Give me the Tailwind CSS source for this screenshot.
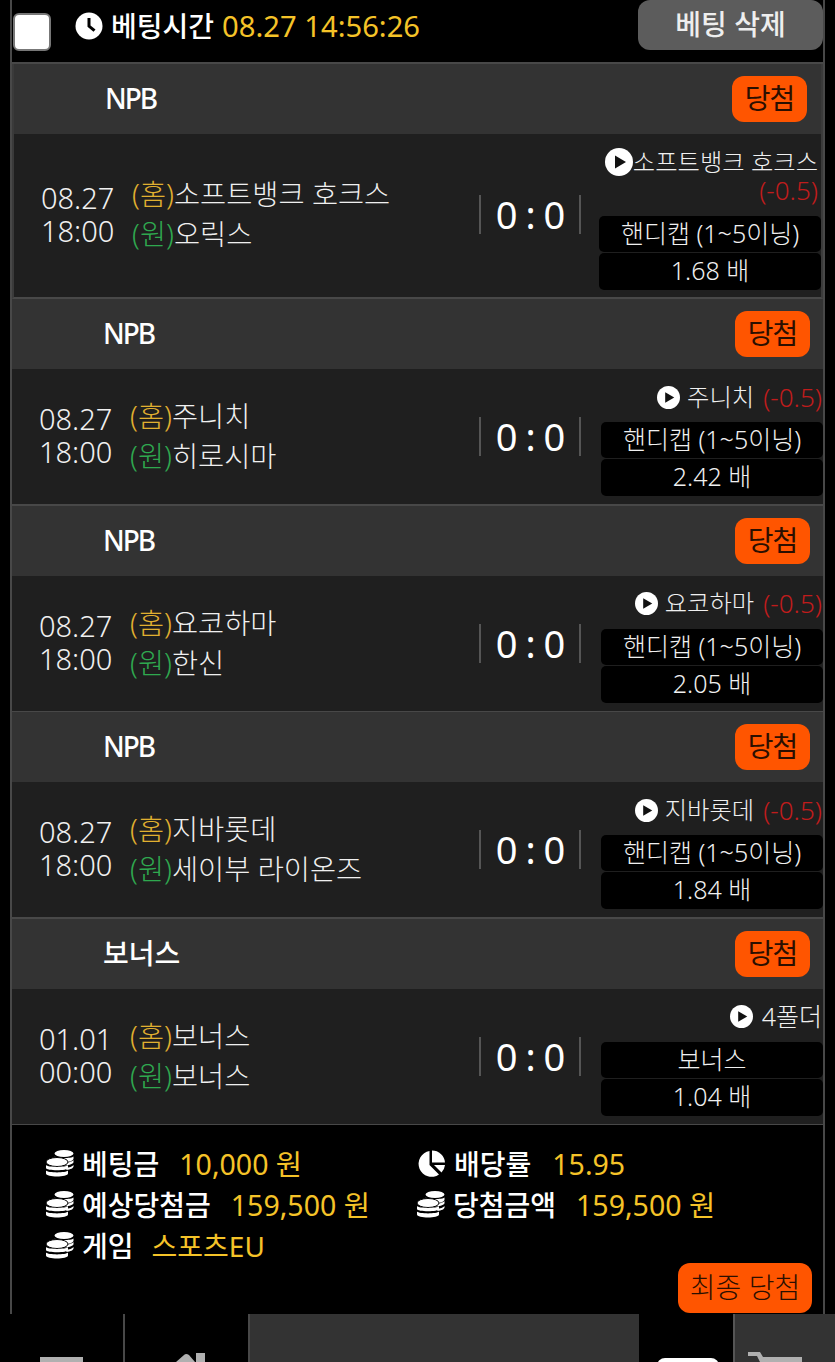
<!DOCTYPE html>
<html lang="ko">
  <head>
    <meta charset="UTF-8" />
    <meta name="viewport" content="width=device-width, initial-scale=1.0" />
    <title>베팅내역</title>
    <script src="https://cdn.jsdelivr.net/npm/@tailwindcss/browser@4"></script>
  </head>
  <body class="bg-black w-[835px] h-[1362px] overflow-hidden font-['Noto_Sans','Noto_Sans_CJK_KR',sans-serif] text-[28px]">
    <svg class="hidden">
      <symbol id="play" viewBox="0 0 28 28"><circle cx="14" cy="14" r="14" fill="#fff" /><path d="M10 7.5 21 14 10 20.5z" fill="#111" /></symbol>
      <symbol id="coins" viewBox="0 0 28 28">
        <ellipse cx="18" cy="3.5" rx="9.5" ry="3.5" fill="#fff" />
        <path d="M8.5 6.5c2 2 17 2 19 0v2c0 2-3 3-6 3.5H12zM17 13c4 0 9-1 10.5-3v2c0 2-4 3-8 3.5zM20 18c3-.5 6.500-1.500 7.500-3v1.500c0 1.500-3 3-7 3.500z" fill="#fff" />
        <ellipse cx="11" cy="12" rx="11" ry="4.500" fill="#fff" stroke="#000" />
        <path d="M0 15c2 2.500 20 2.500 22 0v3c0 3-22 3-22 0zM0 20.500c2 2.500 20 2.500 22 0v3c0 4-22 4-22 0z" fill="#fff" />
      </symbol>
    </svg>

    <div class="mx-[10px] h-[1314px] border-x-2 border-[#484848]">
      <!-- top bar -->
      <div class="h-[52px] flex items-start">
        <div class="w-[38px] h-[38px] ml-px mt-[13px] rounded-[6px] bg-white border-2 border-[#777]"></div>
        <svg class="ml-[24px] mt-[12px]" width="28" height="28" viewBox="0 0 28 28"><circle cx="14" cy="14" r="13.500" fill="#fff" /><path d="M12.500 6h3v7.500l5 4-2 2.200-6-5z" fill="#000" /></svg>
        <span class="ml-[8px] mt-[6px] leading-[40px] font-medium text-white">베팅시간</span>
        <span class="ml-[8px] mt-[6px] text-[29.200px] leading-[40px] text-[#f5c328]">08.27 14:56:26</span>
        <div class="ml-auto w-[185px] h-[50px] rounded-[12px] bg-[#5c5c5c] text-[#eee] leading-[48px] font-medium text-center">베팅 삭제</div>
      </div>
      <div class="h-[12px] border-b-2 border-[#484848]"></div>

      <!-- first game -->
      <div class="h-[235px] border-x-2 border-b-2 border-[#3a3a3a] border-b-[#484848]">
        <div class="h-[70px] bg-[#333] flex items-start justify-between pl-[91px] pr-[14px]">
          <span class="mt-[14px] leading-[40px] font-medium tracking-[-2px] text-white">NPB</span>
          <div class="mt-[12px] w-[75px] h-[46px] rounded-[12px] bg-[#ff5500] text-[#2b0f00] text-center leading-[44px] tracking-[-1px]">당첨</div>
        </div>
        <div class="h-[163px] bg-[#1f1f1f] flex items-start font-light text-[#f0f0f0]">
          <div class="pl-[27px] w-[118px] mt-[47px] text-[29px] leading-[33px]">08.27<br />18:00</div>
          <div class="w-[347px] mt-[40px] text-[28.400px] leading-[40px]">
            <div><span class="text-[#e0b030]">(홈)</span>소프트뱅크 호크스</div>
            <div><span class="text-[#2fa84f]">(원)</span>오릭스</div>
          </div>
          <div class="w-[102px] h-[39px] mt-[61px] border-x-2 border-[#555] flex items-center justify-center text-[38px] leading-[39px] tracking-[-1px] font-normal text-white whitespace-pre">0 : 0</div>
          <div class="ml-[18px] w-[222px] pt-[10px] text-[25px]">
            <div class="h-[36px] flex items-center justify-end pr-[3px] whitespace-nowrap">
              <svg width="28" height="28"><use href="#play" /></svg>
              <span class="text-[24.300px]">소프트뱅크 호크스</span>
            </div>
            <div class="h-[22px] leading-[20px] mb-[14px] pr-[3px] text-right text-[26px] text-[#c01c1c]">(-0.5)</div>
            <div class="h-[36px] mb-px rounded-[5px] bg-black text-center leading-[34px]">핸디캡 (1~5이닝)</div>
            <div class="h-[37px] rounded-[5px] bg-black text-center leading-[35px]">1.68 배</div>
          </div>
        </div>
      </div>

      <!-- second game -->
      <div class="h-[206.6px] border-b-2 border-[#484848]">
        <div class="h-[70px] bg-[#333] flex items-start justify-between pl-[91px] pr-[13px]">
          <span class="mt-[14px] leading-[40px] font-medium tracking-[-2px] text-white">NPB</span>
          <div class="mt-[12px] w-[75px] h-[46px] rounded-[12px] bg-[#ff5500] text-[#2b0f00] text-center leading-[44px] tracking-[-1px]">당첨</div>
        </div>
        <div class="h-[135px] bg-[#1f1f1f] flex items-start font-light text-[#f0f0f0]">
          <div class="pl-[27px] w-[118px] mt-[33px] text-[29px] leading-[33px]">08.27<br />18:00</div>
          <div class="w-[349px] mt-[27px] text-[28.400px] leading-[40px]">
            <div><span class="text-[#e0b030]">(홈)</span>주니치</div>
            <div><span class="text-[#2fa84f]">(원)</span>히로시마</div>
          </div>
          <div class="w-[102px] h-[39px] mt-[48px] border-x-2 border-[#555] flex items-center justify-center text-[38px] leading-[39px] tracking-[-1px] font-normal text-white whitespace-pre">0 : 0</div>
          <div class="ml-[20px] w-[222px] pt-[10px] text-[25px]">
            <div class="h-[36px] mb-[7px] flex items-center justify-end gap-[7px] pr-px whitespace-nowrap">
              <svg width="23" height="23"><use href="#play" /></svg>
              <span class="text-[24.300px]">주니치</span><span class="ml-[2px] text-[26px] text-[#c01c1c]">(-0.5)</span>
            </div>
            <div class="h-[36px] mb-px rounded-[5px] bg-black text-center leading-[34px]">핸디캡 (1~5이닝)</div>
            <div class="h-[37px] rounded-[5px] bg-black text-center leading-[35px]">2.42 배</div>
          </div>
        </div>
      </div>

      <!-- third game -->
      <div class="h-[206.6px] border-b-2 border-[#484848]">
        <div class="h-[70px] bg-[#333] flex items-start justify-between pl-[91px] pr-[13px]">
          <span class="mt-[14px] leading-[40px] font-medium tracking-[-2px] text-white">NPB</span>
          <div class="mt-[12px] w-[75px] h-[46px] rounded-[12px] bg-[#ff5500] text-[#2b0f00] text-center leading-[44px] tracking-[-1px]">당첨</div>
        </div>
        <div class="h-[135px] bg-[#1f1f1f] flex items-start font-light text-[#f0f0f0]">
          <div class="pl-[27px] w-[118px] mt-[33px] text-[29px] leading-[33px]">08.27<br />18:00</div>
          <div class="w-[349px] mt-[27px] text-[28.400px] leading-[40px]">
            <div><span class="text-[#e0b030]">(홈)</span>요코하마</div>
            <div><span class="text-[#2fa84f]">(원)</span>한신</div>
          </div>
          <div class="w-[102px] h-[39px] mt-[48px] border-x-2 border-[#555] flex items-center justify-center text-[38px] leading-[39px] tracking-[-1px] font-normal text-white whitespace-pre">0 : 0</div>
          <div class="ml-[20px] w-[222px] pt-[10px] text-[25px]">
            <div class="h-[36px] mb-[7px] flex items-center justify-end gap-[7px] pr-px whitespace-nowrap">
              <svg width="23" height="23"><use href="#play" /></svg>
              <span class="text-[24.300px]">요코하마</span><span class="ml-[2px] text-[26px] text-[#c01c1c]">(-0.5)</span>
            </div>
            <div class="h-[36px] mb-px rounded-[5px] bg-black text-center leading-[34px]">핸디캡 (1~5이닝)</div>
            <div class="h-[37px] rounded-[5px] bg-black text-center leading-[35px]">2.05 배</div>
          </div>
        </div>
      </div>

      <!-- fourth game -->
      <div class="h-[206.6px] border-b-2 border-[#484848]">
        <div class="h-[70px] bg-[#333] flex items-start justify-between pl-[91px] pr-[13px]">
          <span class="mt-[14px] leading-[40px] font-medium tracking-[-2px] text-white">NPB</span>
          <div class="mt-[12px] w-[75px] h-[46px] rounded-[12px] bg-[#ff5500] text-[#2b0f00] text-center leading-[44px] tracking-[-1px]">당첨</div>
        </div>
        <div class="h-[135px] bg-[#1f1f1f] flex items-start font-light text-[#f0f0f0]">
          <div class="pl-[27px] w-[118px] mt-[33px] text-[29px] leading-[33px]">08.27<br />18:00</div>
          <div class="w-[349px] mt-[27px] text-[28.400px] leading-[40px]">
            <div><span class="text-[#e0b030]">(홈)</span>지바롯데</div>
            <div><span class="text-[#2fa84f]">(원)</span>세이부 라이온즈</div>
          </div>
          <div class="w-[102px] h-[39px] mt-[48px] border-x-2 border-[#555] flex items-center justify-center text-[38px] leading-[39px] tracking-[-1px] font-normal text-white whitespace-pre">0 : 0</div>
          <div class="ml-[20px] w-[222px] pt-[10px] text-[25px]">
            <div class="h-[36px] mb-[7px] flex items-center justify-end gap-[7px] pr-px whitespace-nowrap">
              <svg width="23" height="23"><use href="#play" /></svg>
              <span class="text-[24.300px]">지바롯데</span><span class="ml-[2px] text-[26px] text-[#c01c1c]">(-0.5)</span>
            </div>
            <div class="h-[36px] mb-px rounded-[5px] bg-black text-center leading-[34px]">핸디캡 (1~5이닝)</div>
            <div class="h-[37px] rounded-[5px] bg-black text-center leading-[35px]">1.84 배</div>
          </div>
        </div>
      </div>

      <!-- bonus -->
      <div class="h-[206.6px] border-b-2 border-[#484848]">
        <div class="h-[70px] bg-[#333] flex items-start justify-between pl-[91px] pr-[13px]">
          <span class="mt-[14px] leading-[40px] font-medium text-white">보너스</span>
          <div class="mt-[12px] w-[75px] h-[46px] rounded-[12px] bg-[#ff5500] text-[#2b0f00] text-center leading-[44px] tracking-[-1px]">당첨</div>
        </div>
        <div class="h-[135px] bg-[#1f1f1f] flex items-start font-light text-[#f0f0f0]">
          <div class="pl-[27px] w-[118px] mt-[33px] text-[29px] leading-[33px]">01.01<br />00:00</div>
          <div class="w-[349px] mt-[27px] text-[28.400px] leading-[40px]">
            <div><span class="text-[#e0b030]">(홈)</span>보너스</div>
            <div><span class="text-[#2fa84f]">(원)</span>보너스</div>
          </div>
          <div class="w-[102px] h-[39px] mt-[48px] border-x-2 border-[#555] flex items-center justify-center text-[38px] leading-[39px] tracking-[-1px] font-normal text-white whitespace-pre">0 : 0</div>
          <div class="ml-[20px] w-[222px] pt-[10px] text-[25px]">
            <div class="h-[36px] mb-[7px] flex items-center justify-end gap-[7px] pr-px whitespace-nowrap">
              <svg width="23" height="23"><use href="#play" /></svg>
              <span class="ml-[2px]">4폴더</span>
            </div>
            <div class="h-[36px] mb-px rounded-[5px] bg-black text-center leading-[34px]">보너스</div>
            <div class="h-[37px] rounded-[5px] bg-black text-center leading-[35px]">1.04 배</div>
          </div>
        </div>
      </div>

      <!-- totals -->
      <div class="pt-[18px] pl-[34px]">
        <div class="grid grid-cols-[371px_1fr] auto-rows-[41px] items-center font-medium text-white whitespace-nowrap">
          <div class="flex items-center"><svg width="28" height="28"><use href="#coins" /></svg><span class="ml-[8px] mr-[20px]">베팅금</span><span class="font-normal text-[28.500px] text-[#f5c328]">10,000 원</span></div>
          <div class="flex items-center"><svg width="28" height="28" viewBox="0 0 28 28"><path d="M12.500 1A13 13 0 1 0 22 24.500L12.500 15z" fill="#fff" /><path d="M15 .5A13 13 0 0 1 28 12.500H15z" fill="#fff" /><path d="M17 15h11a13 13 0 0 1-3.500 7.500z" fill="#fff" /></svg><span class="ml-[9px] mr-[21px]">배당률</span><span class="font-normal text-[28.500px] text-[#f5c328]">15.95</span></div>
          <div class="flex items-center"><svg width="28" height="28"><use href="#coins" /></svg><span class="ml-[8px] mr-[20px]">예상당첨금</span><span class="font-normal text-[28.500px] text-[#f5c328]">159,500 원</span></div>
          <div class="flex items-center"><svg width="28" height="28"><use href="#coins" /></svg><span class="ml-[8px] mr-[20px]">당첨금액</span><span class="font-normal text-[28.500px] text-[#f5c328]">159,500 원</span></div>
          <div class="flex items-center"><svg width="28" height="28"><use href="#coins" /></svg><span class="ml-[8px] mr-[18px]">게임</span><span class="font-normal text-[#f5c328]">스포츠EU</span></div>
        </div>
        <div class="flex justify-end mt-[-3px] pr-[11px]">
          <div class="w-[134px] h-[50px] rounded-[12px] bg-[#ff5500] text-[#2b0f00] text-center leading-[48px] font-light">최종 당첨</div>
        </div>
      </div>
    </div>

    <!-- bottom nav, cut off by the window -->
    <div class="flex h-[48px] overflow-hidden">
      <div class="w-[125px] border-r-2 border-[#484848] pl-[40px] pt-[43px]"><div class="w-[43px] h-[8px] bg-[#b0b0b0]"></div></div>
      <div class="w-[123px] pl-[51px] pt-[39px]">
        <svg width="30" height="9" viewBox="0 0 30 9"><path d="M0 9 8 2q2-2 5 0l6 7M20 0h9v9h-9z" fill="#b0b0b0" /></svg>
      </div>
      <div class="w-[391px] bg-[#333] border-l-2 border-[#484848]"></div>
      <div class="w-[94px] pl-[18px] pt-[44px]"><div class="w-[62px] h-[8px] rounded-t-[10px] bg-white"></div></div>
      <div class="flex-1 bg-[#333] border-l-2 border-[#555] pl-[13px] pt-[38px]">
        <svg width="54" height="10" viewBox="0 0 54 10"><path d="M0 0h12l3 5h39v5H12L9 4H0z" fill="#b0b0b0" /></svg>
      </div>
    </div>
  </body>
</html>
